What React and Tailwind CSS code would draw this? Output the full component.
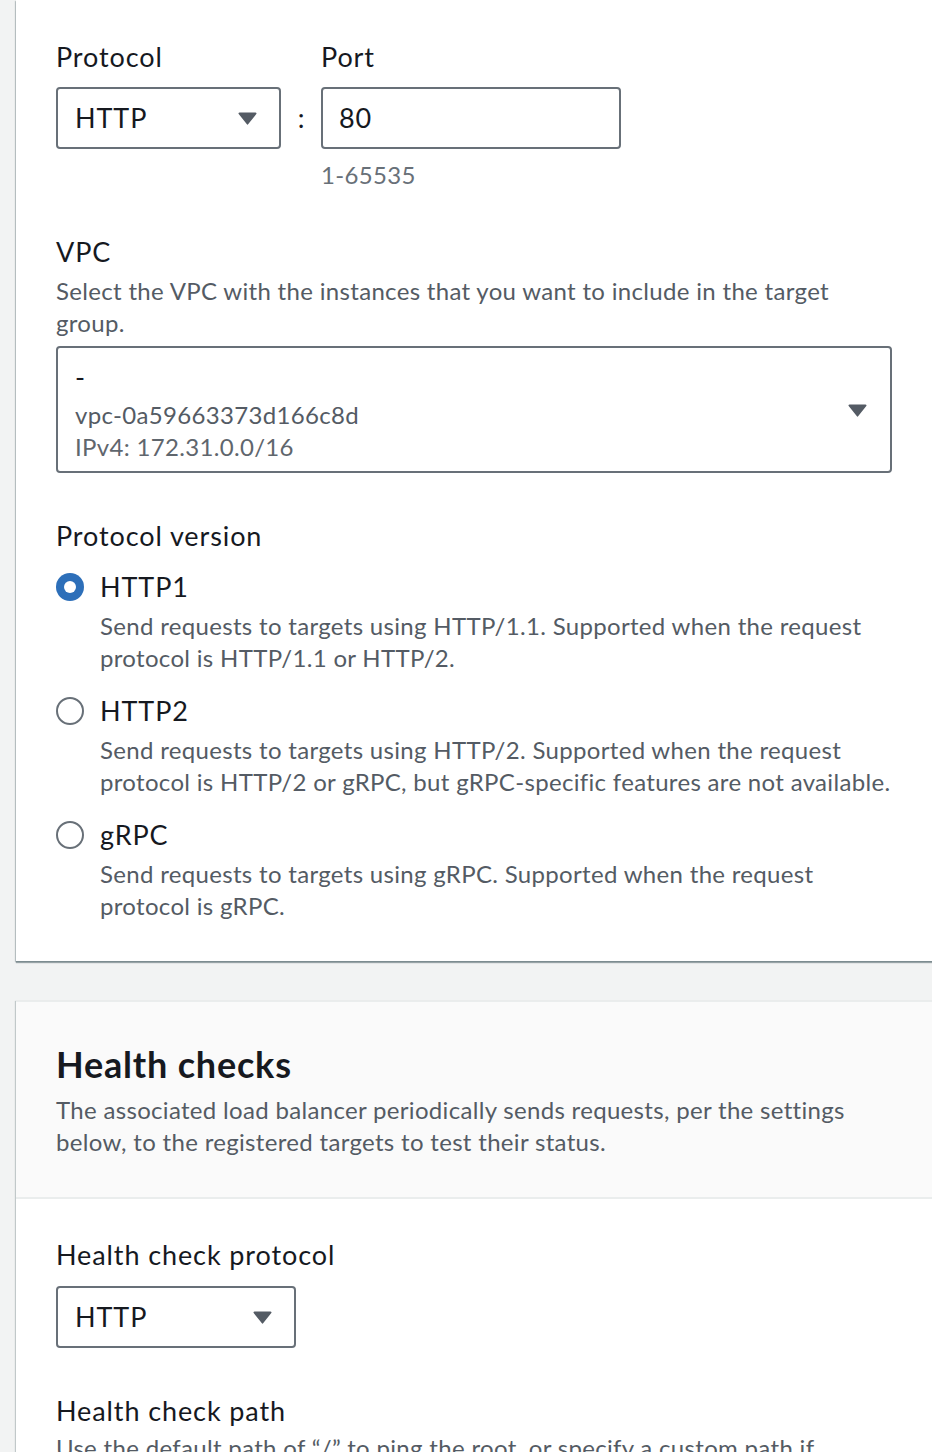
const font = { fontFamily: '"Lato", "Liberation Sans", sans-serif' }

const label = 'text-[27px] leading-[32px] tracking-[0.9px] text-[#16191f]'
const desc = 'text-[24px] leading-[32px] tracking-[0.32px] text-[#545b64]'

function Caret() {
  return (
    <svg viewBox="0 0 20 14" width="21" height="14">
      <path d="M2 1.5h16a1 1 0 0 1 .8 1.6l-8 10a1 1 0 0 1-1.6 0l-8-10A1 1 0 0 1 2 1.5z" fill="#545b64" />
    </svg>
  )
}

function Select({ value, className }) {
  return (
    <div className={`h-[62px] border-2 border-[#687078] rounded-[4px] bg-white flex items-center justify-between pl-[17px] pr-[21px] ${className}`}>
      <span className={label}>{value}</span>
      <Caret />
    </div>
  )
}

function Radio({ checked, title, children }) {
  return (
    <div className="flex gap-[16px]">
      <div className="h-[32px] flex items-center shrink-0">
        {checked ? (
          <div className="w-[28px] h-[28px] rounded-full bg-[#2d6fb9] flex items-center justify-center">
            <div className="w-[12px] h-[12px] rounded-full bg-white" />
          </div>
        ) : (
          <div className="w-[28px] h-[28px] rounded-full border-2 border-[#687078] bg-white" />
        )}
      </div>
      <div>
        <div className={label}>{title}</div>
        <div className={`mt-[7px] whitespace-nowrap ${desc}`}>{children}</div>
      </div>
    </div>
  )
}

export default function App() {
  return (
    <div className="min-h-screen bg-[#f2f3f3] overflow-hidden pl-[16px]" style={font}>
      {/* target group basic config */}
      <div className="w-[940px] bg-white pt-[41px] pb-[39px] pl-[40px] shadow-[0_2px_1px_0_rgba(0,28,36,0.35),-1px_1px_1px_0_rgba(0,28,36,0.2)]">
        <div className="flex items-start">
          <div className="w-[225px]">
            <div className={label}>Protocol</div>
            <Select value="HTTP" className="mt-[14px]" />
          </div>
          <div className="w-[40px] mt-[46px] h-[62px] flex items-center justify-center text-[27px] text-[#16191f]">:</div>
          <div className="w-[300px]">
            <div className={label}>Port</div>
            <div className="mt-[14px] h-[62px] border-2 border-[#687078] rounded-[4px] flex items-center pl-[16px]">
              <span className={label}>80</span>
            </div>
            <div className="mt-[10px] text-[24px] leading-[32px] tracking-[0.32px] text-[#687078]">1-65535</div>
          </div>
        </div>

        <div className={`mt-[45px] ${label}`}>VPC</div>
        <div className={`mt-[7px] w-[800px] ${desc}`}>
          Select the VPC with the instances that you want to include in the target group.
        </div>
        <div className="mt-[7px] w-[836px] h-[127px] border-2 border-[#687078] rounded-[4px] flex items-center justify-between pl-[17px] pr-[22px]">
          <div className="pt-[4px]">
            <div className={label}>-</div>
            <div className={`mt-[6px] ${desc}`}>vpc-0a59663373d166c8d</div>
            <div className="text-[24px] leading-[32px] tracking-[0.32px] text-[#5f666d]">IPv4: 172.31.0.0/16</div>
          </div>
          <Caret />
        </div>

        <div className={`mt-[47px] ${label}`}>Protocol version</div>
        <div className="mt-[19px] flex flex-col gap-[21px]">
          <Radio checked title="HTTP1">
            Send requests to targets using HTTP/1.1. Supported when the request
            <br />
            protocol is HTTP/1.1 or HTTP/2.
          </Radio>
          <Radio title="HTTP2">
            Send requests to targets using HTTP/2. Supported when the request
            <br />
            protocol is HTTP/2 or gRPC, but gRPC-specific features are not available.
          </Radio>
          <Radio title="gRPC">
            Send requests to targets using gRPC. Supported when the request
            <br />
            protocol is gRPC.
          </Radio>
        </div>
      </div>

      {/* health checks */}
      <div className="mt-[40px] w-[940px] bg-white border-t border-[#eaeded] shadow-[-1px_0_1px_0_rgba(0,28,36,0.2)]">
        <div className="bg-[#fafafa] border-b-2 border-[#eaeded] pl-[40px] pt-[40px] pb-[39px]">
          <h2 className="text-[36px] leading-[44px] tracking-[0.8px] font-bold text-[#16191f]">Health checks</h2>
          <p className={`mt-[8px] ${desc}`}>
            The associated load balancer periodically sends requests, per the settings
            <br />
            below, to the registered targets to test their status.
          </p>
        </div>
        <div className="pl-[40px] pt-[40px] pb-[40px]">
          <div className={label}>Health check protocol</div>
          <Select value="HTTP" className="mt-[15px] w-[240px]" />
          <div className={`mt-[47px] ${label}`}>Health check path</div>
          <div className={`mt-[5px] ${desc}`}>
            Use the default path of “/” to ping the root, or specify a custom path if
            <br />
            preferred.
          </div>
        </div>
      </div>
    </div>
  )
}
